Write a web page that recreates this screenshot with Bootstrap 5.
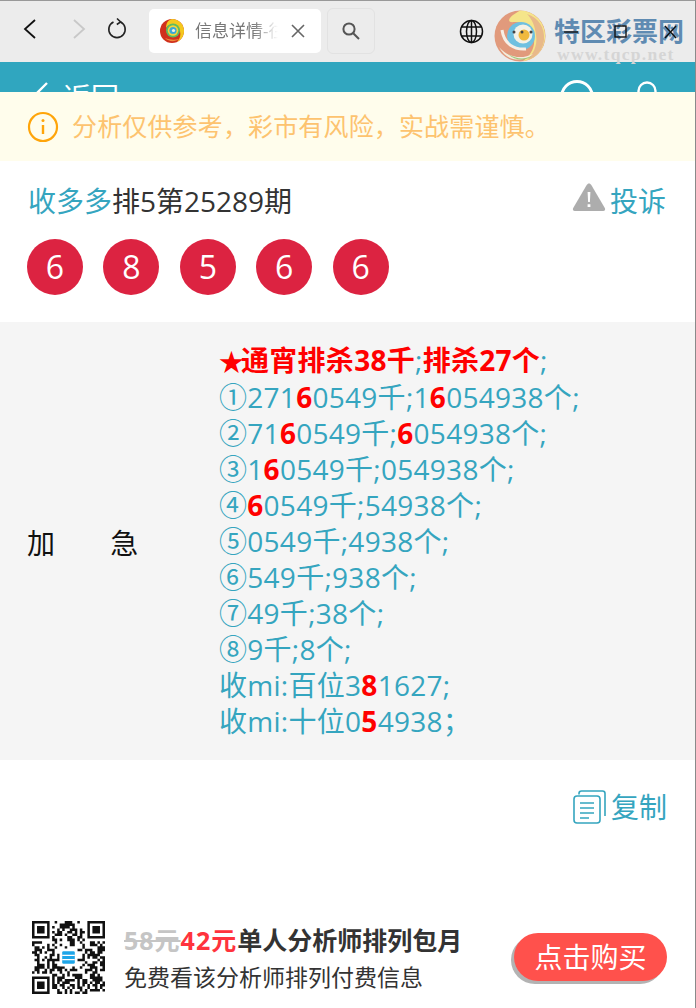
<!doctype html>
<html lang="zh-CN">
<head>
    <meta charset="utf-8">
    <title>信息详情</title>
    <meta name="viewport" content="width=device-width, initial-scale=1">
    <link href="https://cdn.jsdelivr.net/npm/bootstrap@5.3.3/dist/css/bootstrap.min.css" rel="stylesheet">
    <style>
        html, body { height: 1008px; overflow: hidden; }
        body {
            font-family: "Open Sans", "Noto Sans CJK SC", sans-serif;
            background: #fff;
            color: #333;
        }
        .page-frame { position: relative; height: 1008px; border-top: 1px solid #999; border-right: 1px solid #8a8a8a; overflow: hidden; }
        .browser-bar { height: 61px; background: #ececec; padding: 8px 0 0 20px; }
        .tool-icon { width: 20px; height: 24px; flex: none; }
        .back-group { gap: 29px; width: 129px; }
        .reload-icon { margin-left: -11px; }
        .tab-box { width: 172px; height: 44px; background: #fff; border-radius: 5px; padding: 0 16px 0 11px; color: #777; font-size: 17px; }
        .tab-title { width: 83px; margin-left: 11px; white-space: nowrap; overflow: hidden; font-size: 17px; -webkit-mask-image: linear-gradient(90deg, #000 70%, transparent); mask-image: linear-gradient(90deg, #000 70%, transparent); }
        .search-box { width: 48px; height: 46px; margin: -1px 0 0 6px; border: 1px solid #e2e2e2; border-radius: 6px; }
        .globe-icon { position: absolute; left: 459px; top: 18px; }
        .win-icons { position: absolute; left: 560px; top: 22px; z-index: 6; }
        .menu-dots { position: absolute; left: 511px; top: 28px; z-index: 6; }
        .watermark { position: absolute; left: 494px; top: 9px; z-index: 5; pointer-events: none; }
        .mark-title { position: absolute; left: 60px; top: 3px; font-size: 26px; line-height: 36px; font-weight: 700; color: #5f8bb2; white-space: nowrap; }
        .mark-url { position: absolute; left: 63px; top: 34px; font-family: "Liberation Serif", serif; font-size: 17.5px; line-height: 20px; font-weight: 700; letter-spacing: 1.3px; color: #d5d5d5; white-space: nowrap; }
        .top-band { height: 30px; background: #30a6bf; position: relative; overflow: hidden; color: #fff; }
        .back-text { position: absolute; left: 63px; top: 20px; font-size: 28px; line-height: 30px; }
        .back-arrow { position: absolute; left: 33px; top: 20px; }
        .search-ring { position: absolute; left: 559px; top: 17px; }
        .user-ring { position: absolute; left: 636px; top: 18px; }
        .notice-bar { height: 69px; background: #fffdec; color: #fdc36f; font-size: 25px; letter-spacing: .15px; padding-left: 27px; gap: 13px; }
        .head-line { padding: 20px 29px 0 28px; height: 78px; font-size: 28px; line-height: 40px; }
        .complaint-icon { margin-top: 1px; }
        .teal-text { color: #35a5bf; }
        .ball-row { padding: 0 0 0 27px; gap: 20.4px; height: 83px; }
        .ball-num { width: 56px; height: 56px; background: #dc2341; color: #fff; font-size: 32px; border-radius: 50%; }
        .detail-band { background: #f5f5f5; height: 438px; padding-left: 27px; }
        .detail-label { width: 192px; font-size: 28px; color: #111; flex: none; word-spacing: 48px; padding-top: 4px; }
        .detail-text { font-size: 28px; line-height: 36px; letter-spacing: .28px; color: #35a5bf; padding-top: 20px; white-space: nowrap; }
        .hot-red { color: #f00; font-weight: 700; }
        .star-mark { font-size: 25px; letter-spacing: -3px; }
        .copy-line { height: 93px; padding: 22px 28px 0 0; font-size: 28px; line-height: 50px; gap: 4px; }
        .gap-space { height: 63px; }
        .buy-bar { padding-left: 32px; }
        .qr-code { width: 73px; height: 73px; flex: none; margin-top: 5px; }
        .buy-info { width: 409px; padding-left: 19px; padding-top: 6px; white-space: nowrap; }
        .buy-main { font-size: 25px; line-height: 36px; font-weight: 700; color: #333; }
        .old-price { color: #c5c5c5; text-decoration: line-through; letter-spacing: 1px; }
        .new-price { color: #ff333d; letter-spacing: 1px; }
        .buy-sub { font-size: 23px; line-height: 39px; color: #333; }
        .buy-btn { width: 153px; height: 48px; margin-top: 17px; background: #ff514c; color: #fff; font-size: 28px; border-radius: 24px; box-shadow: -3px 3px 0 #b3b3b3; flex: none; }
    </style>
</head>
<body>
<div class="page-frame">

    <!-- browser chrome -->
    <div class="browser-bar d-flex align-items-start">
        <div class="back-group d-flex align-items-center pt-2">
            <svg class="tool-icon" viewBox="0 0 20 24" fill="none" stroke="#111" stroke-width="1.8"><path d="M15 3 5 12l10 9"/></svg>
            <svg class="tool-icon" viewBox="0 0 20 24" fill="none" stroke="#c8c8c8" stroke-width="1.8"><path d="M5 3l10 9-10 9"/></svg>
            <svg class="tool-icon reload-icon" viewBox="0 0 20 24" fill="none" stroke="#222" stroke-width="1.6"><path d="M13.500 5a8.200 8.200 0 1 1-7 0"/><path d="M10 1.500l3.600 3.400-3.800 2.600"/></svg>
        </div>
        <div class="tab-box d-flex align-items-center">
            <svg width="24" height="24" viewBox="0 0 24 24"><circle cx="12" cy="12" r="12" fill="#d0301c"/><path d="M12 0a12 12 0 0 1 12 12c0 5-3 9-7 11 3-3 4-7 3-11-1-3-4-6-8-6-3 0-5 1-6 3C6 4 8 1 12 0z" fill="#f4c81e"/><path d="M5 19c4 4 10 4 14 1-4 1-9 1-14-1z" fill="#f08a3c"/><circle cx="13" cy="11.500" r="7" fill="#5cbb62"/><circle cx="13" cy="11.500" r="5.200" fill="#f5d53a"/><circle cx="13" cy="11.500" r="3.600" fill="#3aa8d8"/><circle cx="13.500" cy="11.500" r="1.600" fill="#f4f0e0"/></svg>
            <div class="tab-title">信息详情-往</div>
            <svg class="ms-auto" width="14" height="14" viewBox="0 0 14 14" stroke="#666" stroke-width="1.600"><path d="M1 1l12 12M13 1 1 13"/></svg>
        </div>
        <div class="search-box d-flex align-items-center justify-content-center">
            <svg width="20" height="20" viewBox="0 0 20 20" fill="none" stroke="#555" stroke-width="2"><circle cx="8" cy="8" r="5.600"/><path d="M12.200 12.200 18 18"/></svg>
        </div>
    </div>
    <svg class="globe-icon" width="25" height="25" viewBox="0 0 25 25" fill="none" stroke="#111" stroke-width="1.500"><circle cx="12.500" cy="12.500" r="11"/><ellipse cx="12.500" cy="12.500" rx="5" ry="11"/><path d="M12.500 1.500v22M2.500 8h20M2.500 17h20"/></svg>
    <svg class="menu-dots" width="24" height="6" viewBox="0 0 24 6" fill="#444"><circle cx="3" cy="3" r="1.500"/><circle cx="11" cy="3" r="1.500"/><circle cx="20" cy="3" r="1.500"/></svg>
    <svg class="win-icons" width="120" height="20" viewBox="0 0 120 20" fill="none" stroke="#111" stroke-width="1.400"><path d="M4 9h14"/><rect x="55" y="3" width="11" height="11"/><path d="M105 3l11 12M116 3l-11 12"/></svg>

    <!-- site watermark over the top right corner -->
    <div class="watermark">
        <svg width="52" height="52" viewBox="0 0 52 52"><circle cx="26" cy="26" r="25.500" fill="#e19a7c"/><path d="M26 .5A25.500 25.500 0 0 1 51 28c-1 12-10 22-22 23 8-6 12-14 11-22C38 18 30 11 20 12 14 13 11 9 26 .5z" fill="#f5e58a"/><path d="M33 4c12 4 18 14 17 26-1 10-8 18-17 20 5-5 11-13 9-25C41 16 38 9 33 4z" fill="#e8b98a"/><path d="M5 37c8 10 22 13 34 7-8 7-25 10-34-7z" fill="#f3ecdc"/><path d="M14 44c8 5 16 6 24 2-6 5-17 5-24-2z" fill="#9ac97a"/><circle cx="27" cy="26" r="14" fill="#6fc0e0"/><circle cx="29" cy="24" r="9.500" fill="#f4f1e6"/><circle cx="30" cy="25" r="5.500" fill="#f0b93e"/><path d="M8 20c2 14 12 20 24 19" fill="none" stroke="#f7efe6" stroke-width="3"/></svg>
        <div class="mark-title">特区彩票网</div>
        <div class="mark-url">www.tqcp.net</div>
    </div>

    <!-- app header, mostly covered by the notice -->
    <div class="top-band">
        <svg class="back-arrow" width="18" height="20" viewBox="0 0 18 20" fill="none" stroke="#fff" stroke-width="2.400"><path d="M14 1 4 11l10 9"/></svg>
        <div class="back-text">返回</div>
        <svg class="search-ring" width="36" height="36" viewBox="0 0 36 36" fill="none" stroke="#fff" stroke-width="3"><circle cx="18" cy="18" r="15.500"/></svg>
        <svg class="user-ring" width="22" height="36" viewBox="0 0 22 36" fill="none" stroke="#fff" stroke-width="2.400"><circle cx="11" cy="11" r="8.500"/></svg>
    </div>

    <div class="notice-bar d-flex align-items-center">
        <svg width="32" height="32" viewBox="0 0 32 32" fill="none" stroke="#ffa50a" stroke-width="2.200"><circle cx="16" cy="16" r="14"/><path d="M16 14v9" stroke-width="2.400"/><circle cx="16" cy="9.500" r="1.500" fill="#ffa50a" stroke="none"/></svg>
        <div>分析仅供参考，彩市有风险，实战需谨慎。</div>
    </div>

    <div class="head-line d-flex justify-content-between">
        <div><span class="teal-text">收多多</span>排5第25289期</div>
        <div class="teal-text d-flex align-items-start gap-1">
            <svg class="complaint-icon" width="34" height="30" viewBox="0 0 34 30"><path d="M17 1.500c1 0 1.700.6 2.300 1.600l13.500 23c.8 1.500.2 2.900-1.600 2.900H2.800C1 29 .4 27.600 1.200 26.100l13.500-23C15.300 2.100 16 1.500 17 1.500z" fill="#adadad"/><path d="M15.600 10h2.800l-.5 10h-1.800zM15.600 22.200h2.800V25h-2.800z" fill="#fff"/></svg>
            <span>投诉</span>
        </div>
    </div>

    <div class="ball-row d-flex">
        <div class="ball-num d-flex align-items-center justify-content-center">6</div>
        <div class="ball-num d-flex align-items-center justify-content-center">8</div>
        <div class="ball-num d-flex align-items-center justify-content-center">5</div>
        <div class="ball-num d-flex align-items-center justify-content-center">6</div>
        <div class="ball-num d-flex align-items-center justify-content-center">6</div>
    </div>

    <div class="detail-band d-flex align-items-center">
        <div class="detail-label">加 急</div>
        <div class="detail-text align-self-start">
            <div><span class="hot-red"><span class="star-mark">★</span>通宵排杀38千</span>;<span class="hot-red">排杀27个</span>;</div>
            <div>①271<span class="hot-red">6</span>0549千;1<span class="hot-red">6</span>054938个;</div>
            <div>②71<span class="hot-red">6</span>0549千;<span class="hot-red">6</span>054938个;</div>
            <div>③1<span class="hot-red">6</span>0549千;054938个;</div>
            <div>④<span class="hot-red">6</span>0549千;54938个;</div>
            <div>⑤0549千;4938个;</div>
            <div>⑥549千;938个;</div>
            <div>⑦49千;38个;</div>
            <div>⑧9千;8个;</div>
            <div>收mi:百位3<span class="hot-red">8</span>1627;</div>
            <div>收mi:十位0<span class="hot-red">5</span>4938；</div>
        </div>
    </div>

    <div class="copy-line d-flex justify-content-end teal-text">
        <svg class="mt-2" width="34" height="34" viewBox="0 0 34 34" fill="none" stroke="#35a5bf" stroke-width="1.600"><path d="M6 4.500V3.500Q6 1 8.500 1h21Q32 1 32 3.500V26"/><rect x="1" y="6" width="26" height="27" rx="3"/><path d="M7 13h14M7 18h14M7 23h14M7 28h9"/></svg>
        <span>复制</span>
    </div>

    <div class="gap-space"></div>

    <div class="buy-bar d-flex">
        <svg class="qr-code" id="qr" viewBox="0 0 29 29"></svg>
        <div class="buy-info">
            <div class="buy-main"><span class="old-price">58元</span><span class="new-price">42元</span>单人分析师排列包月</div>
            <div class="buy-sub">免费看该分析师排列付费信息</div>
        </div>
        <div class="buy-btn d-flex align-items-center justify-content-center">点击购买</div>
    </div>
</div>

<script src="https://cdn.jsdelivr.net/npm/bootstrap@5.3.3/dist/js/bootstrap.bundle.min.js"></script>
<script>
    // QR code: finder squares plus a fixed scatter of modules
    const qr = document.getElementById('qr');
    let d = '';
    function box(x, y, w, h) { d += `M${x} ${y}h${w}v${h}h-${w}z`; }
    function finder(x, y) {
        box(x, y, 7, 1); box(x, y + 6, 7, 1); box(x, y + 1, 1, 5); box(x + 6, y + 1, 1, 5); box(x + 2, y + 2, 3, 3);
    }
    finder(0, 0); finder(22, 0); finder(0, 22);
    let seed = 11;
    for (let y = 0; y < 29; y++) {
        for (let x = 0; x < 29; x++) {
            seed = (seed * 1103515245 + 12345) & 0x7fffffff;
            const inFinder = (x < 8 && y < 8) || (x > 20 && y < 8) || (x < 8 && y > 20);
            const inLogo = x > 10 && x < 18 && y > 10 && y < 18;
            if (!inFinder && !inLogo && (seed >> 16) % 100 < 52) box(x, y, 1, 1);
        }
    }
    qr.innerHTML = `<path d="${d}" fill="#111"/><rect x="11" y="11" width="7" height="7" fill="#fff"/><rect x="12" y="12" width="5" height="5" rx=".5" fill="#1da5e8"/><path d="M12 13.700h5M12 15.300h5" stroke="#fff" stroke-width=".5"/>`;
</script>
</body>
</html>
